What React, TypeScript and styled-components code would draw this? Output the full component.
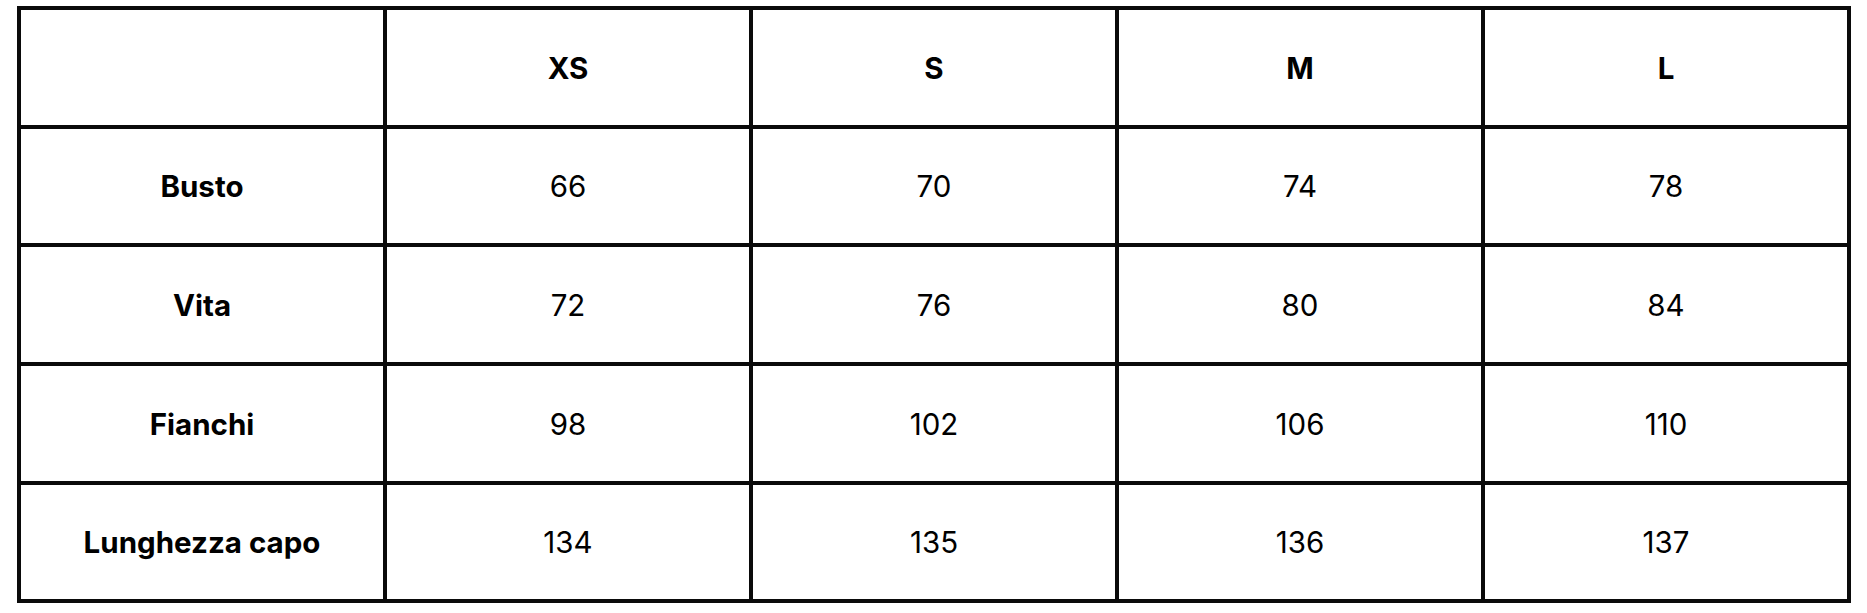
import React from 'react';
import styled, { createGlobalStyle } from 'styled-components';

const GlobalStyle = createGlobalStyle`
  html, body {
    margin: 0;
    padding: 0;
    background: #ffffff;
  }

  body {
    font-family: Inter, 'Noto Sans', 'Liberation Sans', sans-serif;
    color: #000000;
  }
`;

const StyledPage = styled.main`
  padding: 6px 0 0 17px;
`;

const StyledTable = styled.table`
  width: 1834px;
  border-collapse: collapse;
  table-layout: fixed;
  border: 4px solid #0a0a0a;

  th,
  td {
    height: 112.7px;
    border: 4px solid #0a0a0a;
    text-align: center;
    vertical-align: middle;
    line-height: 1;
    padding: 2px 0 0;
  }

  th {
    font-size: 29.5px;
    font-weight: 700;
  }

  td {
    font-size: 29.5px;
    font-weight: 400;
  }
`;

const sizes = ['XS', 'S', 'M', 'L'];

const rows = [
  { label: 'Busto', values: [66, 70, 74, 78] },
  { label: 'Vita', values: [72, 76, 80, 84] },
  { label: 'Fianchi', values: [98, 102, 106, 110] },
  { label: 'Lunghezza capo', values: [134, 135, 136, 137] },
];

const App = () => {
  return (
    <>
      <GlobalStyle />
      <StyledPage>
        <StyledTable>
          <thead>
            <tr>
              <th />
              {sizes.map((size) => (
                <th key={size}>{size}</th>
              ))}
            </tr>
          </thead>
          <tbody>
            {rows.map((row) => (
              <tr key={row.label}>
                <th scope="row">{row.label}</th>
                {row.values.map((value, i) => (
                  <td key={sizes[i]}>{value}</td>
                ))}
              </tr>
            ))}
          </tbody>
        </StyledTable>
      </StyledPage>
    </>
  );
};

export default App;
